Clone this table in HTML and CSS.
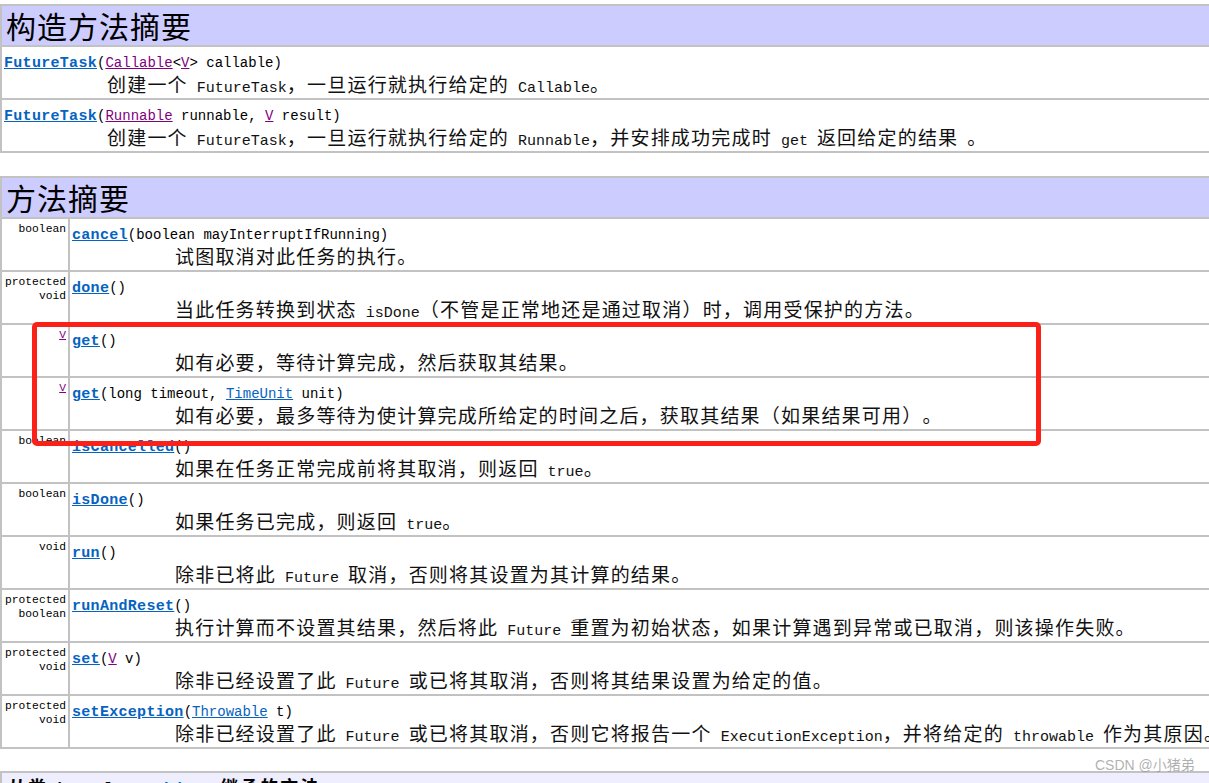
FILE: index.html
```html
<!DOCTYPE html>
<html lang="zh-CN">
<head>
<meta charset="utf-8">
<title>FutureTask</title>
<link rel="stylesheet" href="styles.css">
</head>
<body>
<div class="page">
  <table class="summary ctor">
    <tr><th class="head">构造方法摘要</th></tr>
    <tr><td class="main">
      <div class="sig"><a class="name">FutureTask</a>(<a class="tl visited">Callable</a>&lt;<a class="tl visited">V</a>&gt; callable)</div>
      <div class="desc">创建一个<code> FutureTask</code>，一旦运行就执行给定的<code> Callable</code>。</div>
    </td></tr>
    <tr><td class="main">
      <div class="sig"><a class="name">FutureTask</a>(<a class="tl visited">Runnable</a> runnable, <a class="tl visited">V</a> result)</div>
      <div class="desc">创建一个<code> FutureTask</code>，一旦运行就执行给定的<code> Runnable</code>，并安排成功完成时<code> get </code>返回给定的结果<code> </code>。</div>
    </td></tr>
  </table>

  <table class="summary methods">
    <tr><th class="head" colspan="2">方法摘要</th></tr>
    <tr>
      <td class="type">boolean</td>
      <td class="main"><div class="sig"><a class="name">cancel</a>(boolean mayInterruptIfRunning)</div>
        <div class="desc">试图取消对此任务的执行。</div></td>
    </tr>
    <tr>
      <td class="type">protected<br>void</td>
      <td class="main"><div class="sig"><a class="name">done</a>()</div>
        <div class="desc">当此任务转换到状态<code> isDone</code>（不管是正常地还是通过取消）时，调用受保护的方法。</div></td>
    </tr>
    <tr>
      <td class="type"><a class="tl visited">V</a></td>
      <td class="main"><div class="sig"><a class="name">get</a>()</div>
        <div class="desc">如有必要，等待计算完成，然后获取其结果。</div></td>
    </tr>
    <tr>
      <td class="type"><a class="tl visited">V</a></td>
      <td class="main"><div class="sig"><a class="name">get</a>(long timeout, <a class="tl">TimeUnit</a> unit)</div>
        <div class="desc">如有必要，最多等待为使计算完成所给定的时间之后，获取其结果（如果结果可用）。</div></td>
    </tr>
    <tr>
      <td class="type">boolean</td>
      <td class="main"><div class="sig"><a class="name">isCancelled</a>()</div>
        <div class="desc">如果在任务正常完成前将其取消，则返回<code> true</code>。</div></td>
    </tr>
    <tr>
      <td class="type">boolean</td>
      <td class="main"><div class="sig"><a class="name">isDone</a>()</div>
        <div class="desc">如果任务已完成，则返回<code> true</code>。</div></td>
    </tr>
    <tr>
      <td class="type">void</td>
      <td class="main"><div class="sig"><a class="name">run</a>()</div>
        <div class="desc">除非已将此<code> Future </code>取消，否则将其设置为其计算的结果。</div></td>
    </tr>
    <tr>
      <td class="type">protected<br>boolean</td>
      <td class="main"><div class="sig"><a class="name">runAndReset</a>()</div>
        <div class="desc">执行计算而不设置其结果，然后将此<code> Future </code>重置为初始状态，如果计算遇到异常或已取消，则该操作失败。</div></td>
    </tr>
    <tr>
      <td class="type">protected<br>void</td>
      <td class="main"><div class="sig"><a class="name">set</a>(<a class="tl visited">V</a> v)</div>
        <div class="desc">除非已经设置了此<code> Future </code>或已将其取消，否则将其结果设置为给定的值。</div></td>
    </tr>
    <tr>
      <td class="type">protected<br>void</td>
      <td class="main"><div class="sig"><a class="name">setException</a>(<a class="tl">Throwable</a> t)</div>
        <div class="desc">除非已经设置了此<code> Future </code>或已将其取消，否则它将报告一个<code> ExecutionException</code>，并将给定的<code> throwable </code>作为其原因。</div></td>
    </tr>
  </table>

  <table class="summary inherited">
    <tr><th class="subhead">从类 <code>java.lang.</code><a class="tl"><code>Object</code></a> 继承的方法</th></tr>
    <tr><td class="main"><code>clone, equals, finalize, getClass, hashCode, notify, notifyAll, toString, wait</code></td></tr>
  </table>

  <div class="mark" aria-hidden="true"></div>
  <div class="watermark">CSDN @小猪弟</div>
</div>
</body>
</html>
```

FILE: styles.css
```css
html, body {
  margin: 0;
  padding: 0;
  overflow: hidden;
  background: #ffffff;
}

.page {
  position: relative;
  width: 1300px;
  padding-top: 4px;
  font-family: "Noto Sans CJK SC", sans-serif;
  color: #000;
  text-spacing-trim: space-all;
}

.summary {
  width: 1300px;
  border-collapse: separate;
  border-spacing: 0;
  border-top: 2px solid #c2c2c2;
  border-left: 2px solid #c2c2c2;
}

.summary th,
.summary td {
  border-right: 2px solid #c2c2c2;
  border-bottom: 2px solid #c2c2c2;
  vertical-align: top;
  text-align: left;
}

.ctor {
  margin-bottom: 23px;
}

.methods {
  margin-bottom: 22px;
}

.head {
  background: #ccccff;
  height: 39px;
  padding: 0 0 0 4px;
  font-family: "Noto Sans CJK SC", sans-serif;
  font-size: 30px;
  font-weight: 400;
  letter-spacing: 1px;
  line-height: 38px;
  vertical-align: middle;
}

.subhead {
  background: #eeeeff;
  padding: 2px 0 0 6px;
  font-family: "Noto Sans CJK SC", sans-serif;
  font-size: 18px;
  font-weight: 700;
  letter-spacing: 2px;
  line-height: 22px;
}

.subhead code {
  font-family: "Liberation Mono", monospace;
  font-size: 16px;
  font-weight: 700;
  letter-spacing: 0.4px;
}

.type {
  width: 64px;
  padding: 3px 2px 0 0;
  text-align: right !important;
  font-family: "Liberation Mono", monospace;
  font-size: 11.3px;
  line-height: 14px;
  white-space: nowrap;
}

.main {
  padding: 6px 0 3px 2px;
  white-space: nowrap;
}

.sig {
  height: 20px;
  line-height: 20px;
  font-family: "Liberation Mono", monospace;
  font-size: 14px;
}

.name {
  color: #0563c1;
  text-decoration: underline;
  font-weight: 700;
  font-size: 15px;
  letter-spacing: 0.3px;
}

.tl {
  color: #0563c1;
  text-decoration: underline;
}

.tl.visited {
  color: #800080;
}

.desc {
  height: 22px;
  line-height: 22px;
  padding-left: 103px;
  font-family: "Noto Sans CJK SC", sans-serif;
  font-size: 19px;
  letter-spacing: 1.2px;
  color: #111;
  text-spacing-trim: space-all;
}

.desc code {
  font-family: "Liberation Mono", monospace;
  font-size: 15px;
  letter-spacing: 0;
  white-space: pre;
}

.inherited .main {
  font-family: "Liberation Mono", monospace;
  font-size: 14px;
  line-height: 20px;
}

.mark {
  position: absolute;
  left: 32px;
  top: 322px;
  width: 999px;
  height: 114px;
  border: 5px solid #fb2118;
  border-radius: 5px;
  pointer-events: none;
}

.watermark {
  position: absolute;
  left: 1095px;
  top: 757px;
  font-family: "Liberation Sans", "Noto Sans CJK SC", sans-serif;
  font-size: 14px;
  line-height: 16px;
  color: rgba(150, 150, 150, 0.75);
  white-space: nowrap;
}
```
